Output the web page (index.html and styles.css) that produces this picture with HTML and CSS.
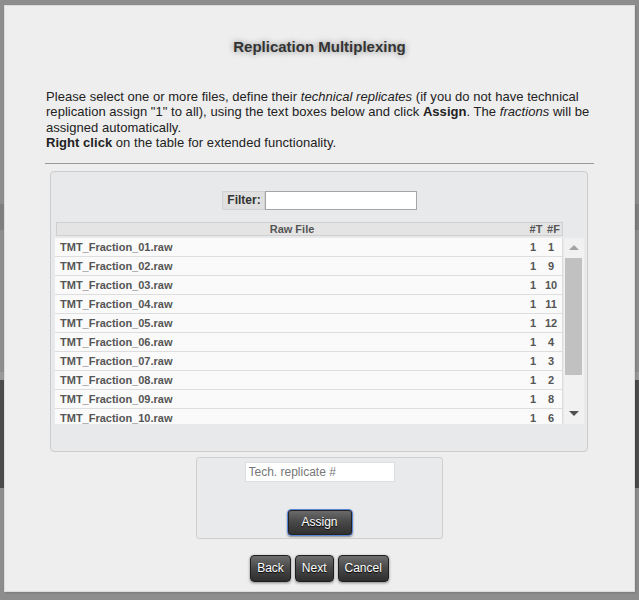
FILE: index.html
```html
<!DOCTYPE html>
<html>
<head>
<meta charset="utf-8">
<link rel="stylesheet" href="styles.css">
</head>
<body>
<div class="dialog">
  <h1 class="title">Replication Multiplexing</h1>
  <p class="intro">Please select one or more files, define their <i>technical replicates</i> (if you do not have technical replication assign "1" to all), using the text boxes below and click <b>Assign</b>. The <i>fractions</i> will be assigned automatically.<br><b>Right click</b> on the table for extended functionality.</p>
  <div class="rule"></div>
  <div class="panel">
    <div class="filter">
      <label class="filter-label">Filter:</label>
      <input class="filter-input" type="text">
    </div>
    <div class="table">
      <div class="thead">
        <span class="th-name">Raw File</span>
        <span class="th-t">#T</span>
        <span class="th-f">#F</span>
      </div>
      <div class="tbody-wrap">
        <div class="tbody">
          <div class="row"><span class="name">TMT_Fraction_01.raw</span><span class="t">1</span><span class="f">1</span></div>
          <div class="row"><span class="name">TMT_Fraction_02.raw</span><span class="t">1</span><span class="f">9</span></div>
          <div class="row"><span class="name">TMT_Fraction_03.raw</span><span class="t">1</span><span class="f">10</span></div>
          <div class="row"><span class="name">TMT_Fraction_04.raw</span><span class="t">1</span><span class="f">11</span></div>
          <div class="row"><span class="name">TMT_Fraction_05.raw</span><span class="t">1</span><span class="f">12</span></div>
          <div class="row"><span class="name">TMT_Fraction_06.raw</span><span class="t">1</span><span class="f">4</span></div>
          <div class="row"><span class="name">TMT_Fraction_07.raw</span><span class="t">1</span><span class="f">3</span></div>
          <div class="row"><span class="name">TMT_Fraction_08.raw</span><span class="t">1</span><span class="f">2</span></div>
          <div class="row"><span class="name">TMT_Fraction_09.raw</span><span class="t">1</span><span class="f">8</span></div>
          <div class="row"><span class="name">TMT_Fraction_10.raw</span><span class="t">1</span><span class="f">6</span></div>
        </div>
        <div class="scrollbar">
          <div class="sb-btn"><span class="arrow-up"></span></div>
          <div class="sb-thumb"></div>
          <div class="sb-space"></div>
          <div class="sb-btn"><span class="arrow-down"></span></div>
        </div>
      </div>
    </div>
  </div>
  <div class="assign-box">
    <input class="rep-input" type="text" placeholder="Tech. replicate #">
    <button class="btn btn-assign">Assign</button>
  </div>
  <div class="actions">
    <button class="btn">Back</button>
    <button class="btn">Next</button>
    <button class="btn">Cancel</button>
  </div>
</div>
</body>
</html>
```

FILE: styles.css
```css
html, body {
  margin: 0;
  padding: 0;
}
body {
  width: 639px;
  height: 600px;
  overflow: hidden;
  font-family: "Liberation Sans", Arial, sans-serif;
  background: linear-gradient(to bottom,
    #8d8d8d 0, #8d8d8d 204px,
    #7f7f7f 204px, #7f7f7f 230px,
    #8d8d8d 230px, #8d8d8d 372px,
    #999999 372px, #999999 380px,
    #4b4b4b 380px, #4b4b4b 488px,
    #8d8d8d 488px);
  padding-top: 5px;
  box-sizing: border-box;
}
.dialog {
  margin-left: 4px;
  width: 631px;
  height: 587px;
  box-sizing: border-box;
  background: #eeeeee;
  border: 1px solid #dcdcdc;
  padding: 0 40px;
  box-shadow: 1px 1px 2px rgba(0,0,0,0.15);
}
.title {
  margin: 32px 0 0;
  text-align: center;
  font-size: 15px;
  line-height: 18px;
  font-weight: bold;
  color: #333;
  text-shadow: 0 0 6px #888;
}
.intro {
  margin: 33px 0 0;
  padding-left: 1px;
  font-size: 13px;
  line-height: 15.4px;
  letter-spacing: 0.04px;
  color: #222;
}
.rule {
  margin-top: 12px;
  height: 0;
  border-top: 1px solid #9a9a9a;
}
.panel {
  margin: 7px 6px 0 5px;
  border: 1px solid #cccccc;
  border-radius: 4px;
  background: #e8e9eb;
  padding: 19px 3px 27px 4px;
}
.filter {
  display: flex;
  justify-content: center;
  height: 19px;
}
.filter-label {
  box-sizing: border-box;
  height: 19px;
  padding: 0 3px 0 4px;
  background: #e0e0e0;
  border: 1px solid #d2d2d2;
  font-size: 12px;
  line-height: 17px;
  font-weight: bold;
  color: #333;
}
.filter-input {
  box-sizing: border-box;
  width: 152px;
  height: 19px;
  margin: 0;
  border: 1px solid #a5a5a5;
  background: #fff;
  padding: 0 3px;
}
.table {
  margin-top: 12px;
}
.thead {
  display: flex;
  box-sizing: border-box;
  margin-left: 1px;
  width: 507px;
  height: 14px;
  background: #e4e4e4;
  border: 1px solid #cfcfcf;
  font-size: 11px;
  line-height: 12px;
  font-weight: bold;
  color: #555;
}
.th-name {
  flex: 1;
  text-align: center;
}
.th-t {
  width: 18px;
  text-align: center;
}
.th-f {
  width: 17px;
  text-align: center;
}
.tbody-wrap {
  margin-top: 2px;
  display: flex;
  height: 186px;
}
.tbody {
  width: 508px;
  height: 186px;
  overflow: hidden;
  border-right: 1px solid #dcdcdc;
  box-sizing: border-box;
}
.row {
  display: flex;
  box-sizing: border-box;
  height: 19px;
  background: #fafafa;
  border-bottom: 1px solid #dedede;
  font-size: 11px;
  line-height: 18px;
  font-weight: bold;
  color: #555;
}
.name {
  flex: 1;
  padding-left: 5px;
}
.t {
  width: 18px;
  text-align: center;
}
.f {
  width: 18px;
  text-align: center;
  margin-right: 2px;
}
.scrollbar {
  width: 20px;
  height: 186px;
  background: #f1f1f1;
  display: flex;
  flex-direction: column;
  margin-left: 1px;
}
.sb-btn {
  height: 20px;
  display: flex;
  align-items: center;
  justify-content: center;
}
.arrow-up {
  width: 0;
  height: 0;
  border-left: 5px solid transparent;
  border-right: 5px solid transparent;
  border-bottom: 5px solid #a3a3a3;
}
.arrow-down {
  width: 0;
  height: 0;
  border-left: 5px solid transparent;
  border-right: 5px solid transparent;
  border-top: 5px solid #505050;
}
.sb-thumb {
  margin-left: 1px;
  width: 17px;
  height: 117px;
  background: #c1c1c1;
}
.sb-space {
  flex: 1;
}
.assign-box {
  box-sizing: border-box;
  width: 247px;
  height: 82px;
  margin: 5px auto 0;
  border: 1px solid #cfcfcf;
  border-radius: 3px;
  background: #e9eaec;
  padding-top: 4px;
  display: flex;
  flex-direction: column;
  align-items: center;
}
.rep-input {
  box-sizing: border-box;
  width: 150px;
  height: 20px;
  margin: 0;
  border: 1px solid #dddddd;
  background: #fff;
  padding: 0 3px;
  font-family: "Liberation Sans", Arial, sans-serif;
  font-size: 12px;
}
.rep-input::placeholder {
  color: #777;
}
.btn {
  box-sizing: border-box;
  height: 27px;
  margin: 0;
  padding: 0 6px;
  border: 1px solid #1e1e1e;
  border-radius: 4px;
  background: linear-gradient(to bottom, #6e6e6e 0%, #4a4a4a 45%, #2e2e2e 100%);
  color: #fff;
  font-family: "Liberation Sans", Arial, sans-serif;
  font-size: 12px;
  text-shadow: 0 1px 1px #000;
  box-shadow: 0 1px 3px rgba(0,0,0,0.45);
}
.btn-assign {
  margin-top: 27px;
  width: 66px;
  border-color: #5b86d8;
  box-shadow: inset 0 0 0 1px #222, 0 1px 2px rgba(0,0,0,0.4);
}
.actions {
  margin-top: 16px;
  display: flex;
  justify-content: center;
  gap: 4px;
}
```
